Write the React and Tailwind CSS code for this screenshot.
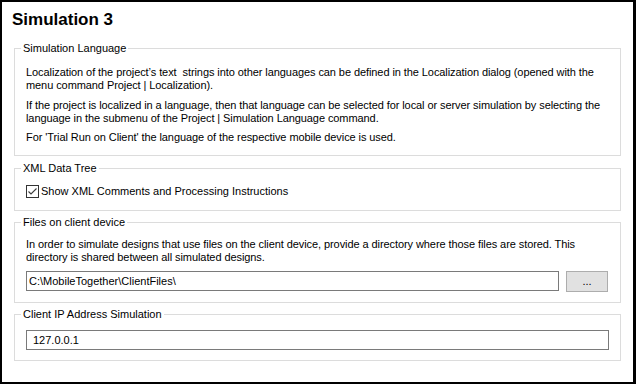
import React from 'react';

const Group = ({ legend, className = '', children }) => (
  <fieldset className={`border border-[#dcdcdc] px-[11px] ${className}`}>
    <legend className="ml-[-5px] px-[2px] text-[11px] leading-[13px] text-black">{legend}</legend>
    {children}
  </fieldset>
);

const CheckBox = () => (
  <span className="flex h-[13px] w-[13px] shrink-0 items-center justify-center border border-[#333333] bg-white">
    <svg width="11" height="11" viewBox="0 0 11 11">
      <path d="M1.5 5.5 L4 8 L9.5 2.5" fill="none" stroke="#3c3c3c" strokeWidth="1.1" />
    </svg>
  </span>
);

const App = () => {
  return (
    <div
      className="h-[384px] w-[636px] border-2 border-r-[3px] border-black bg-white px-[12px] pt-[8px] text-black"
      style={{ fontFamily: '"Liberation Sans", Arial, sans-serif' }}
    >
      <h1 className="ml-[-2px] text-[17px] font-bold leading-[20px]">Simulation 3</h1>

      <Group legend="Simulation Language" className="mt-[12px] pt-[11px] pb-[11px]">
        <div className="text-[11px] leading-[13px] tracking-[-0.08px]">
          <p>
            Localization of the project’s text&nbsp; strings into other languages can be defined in the Localization dialog (opened with the
            <br />
            menu command Project | Localization).
          </p>
          <p className="mt-[7px] whitespace-nowrap">
            If the project is localized in a language, then that language can be selected for local or server simulation by selecting the
            <br />
            language in the submenu of the Project | Simulation Language command.
          </p>
          <p className="mt-[6px]">For 'Trial Run on Client' the language of the respective mobile device is used.</p>
        </div>
      </Group>

      <Group legend="XML Data Tree" className="mt-[6px] pt-[10px] pb-[12px]">
        <div className="flex h-[13px] items-center gap-[2px] text-[11px] leading-[13px]">
          <CheckBox />
          <span>Show XML Comments and Processing Instructions</span>
        </div>
      </Group>

      <Group legend="Files on client device" className="mt-[5px] pt-[9px] pb-[10px]">
        <p className="text-[11px] leading-[13px] tracking-[-0.08px]">
          In order to simulate designs that use files on the client device, provide a directory where those files are stored. This
          <br />
          directory is shared between all simulated designs.
        </p>
        <div className="mt-[7px] flex items-start gap-[7px]">
          <input
            readOnly
            defaultValue="C:\MobileTogether\ClientFiles\"
            className="h-[20px] flex-1 border border-[#7a7a7a] bg-white px-[2px] text-[11px] text-black outline-none"
          />
          <button className="mr-[1px] flex h-[21px] w-[42px] items-center justify-center border border-[#adadad] bg-[#e1e1e1] text-[11px] leading-none">
            ...
          </button>
        </div>
      </Group>

      <Group legend="Client IP Address Simulation" className="mt-[5px] pt-[9px] pb-[10px]">
        <input
          readOnly
          defaultValue="127.0.0.1"
          className="block h-[20px] w-full border border-[#7a7a7a] bg-white px-[6px] text-[11px] text-black outline-none"
        />
      </Group>
    </div>
  );
};

export default App;
